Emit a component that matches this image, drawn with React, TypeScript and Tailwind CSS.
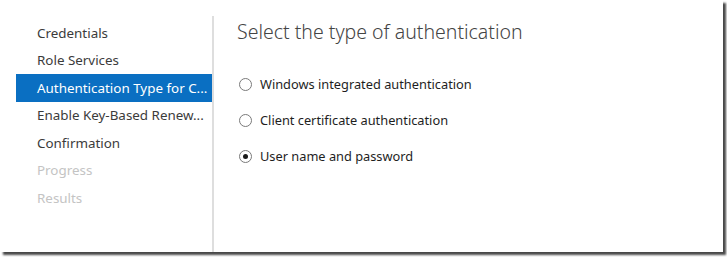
import React, { useState } from "react";

const steps = [
  { label: "Credentials", state: "done" },
  { label: "Role Services", state: "done" },
  { label: "Authentication Type for C...", state: "active" },
  { label: "Enable Key-Based Renew...", state: "done" },
  { label: "Confirmation", state: "done" },
  { label: "Progress", state: "disabled" },
  { label: "Results", state: "disabled" },
];

const options = [
  "Windows integrated authentication",
  "Client certificate authentication",
  "User name and password",
];

const Radio: React.FC<{ checked: boolean }> = ({ checked }) => (
  <span className="flex h-[13px] w-[13px] items-center justify-center rounded-full border border-[#7a7a7a] bg-white">
    {checked && <span className="h-[5px] w-[5px] rounded-full bg-[#1a1a1a]" />}
  </span>
);

const App: React.FC = () => {
  const [choice, setChoice] = useState(2);

  return (
    <div className="h-[257px] w-[727px] bg-white" style={{ fontFamily: '"Noto Sans", "Open Sans", sans-serif' }}>
      <div className="flex h-[252px] w-[723px] bg-white shadow-[3px_3px_2px_rgba(40,40,40,0.85)]">
        <nav className="flex w-[212px] shrink-0 flex-col pt-[19px] pl-[16px]">
          {steps.map((s) => (
            <div
              key={s.label}
              className={
                "flex h-[27.5px] items-center whitespace-nowrap pl-[21px] text-[13.4px] " +
                (s.state === "active"
                  ? "bg-[#0a6fc2] text-white"
                  : s.state === "disabled"
                  ? "text-[#c4c4c4]"
                  : "text-[#3b3b3b]")
              }
            >
              {s.label}
            </div>
          ))}
        </nav>
        <div className="mt-[16px] w-[2px] shrink-0 bg-[#dedede]" />
        <main className="flex-1 pl-[23px] pt-[17px]">
          <h1 className="text-[19.5px] font-light leading-[30px] text-[#444]">
            Select the type of authentication
          </h1>
          <div className="mt-[27px] flex flex-col gap-[15px] pl-[2px]">
            {options.map((o, i) => (
              <label
                key={o}
                onClick={() => setChoice(i)}
                className="flex h-[21px] cursor-default items-center gap-[8px] text-[12.8px] text-[#1e1e1e]"
              >
                <Radio checked={choice === i} />
                <span>{o}</span>
              </label>
            ))}
          </div>
        </main>
      </div>
    </div>
  );
};

export default App;
